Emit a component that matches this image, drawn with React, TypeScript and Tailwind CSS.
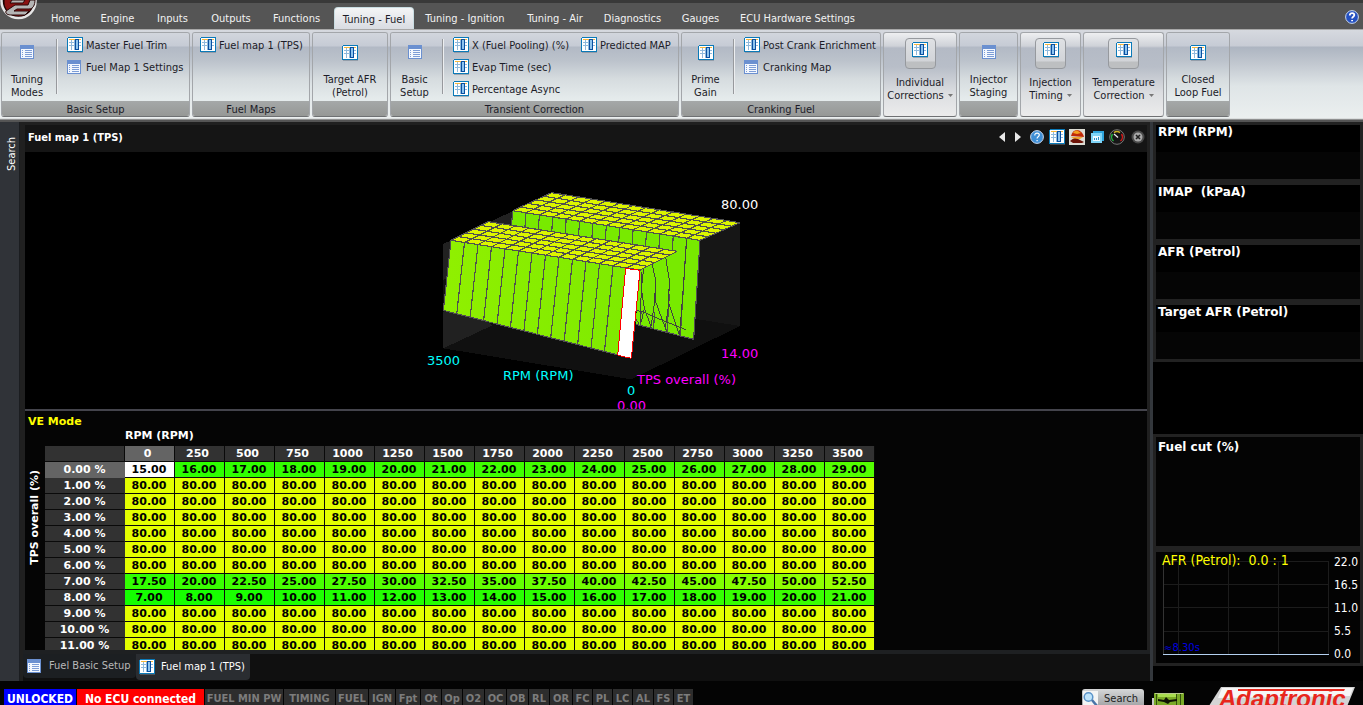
import React, { useState } from 'react';
import clsx from 'clsx';

const TAHOMA = "font-['Tahoma','DejaVu_Sans_Condensed','DejaVu_Sans',sans-serif]";
const VERDANA = "font-['Verdana','DejaVu_Sans',sans-serif]";

const menuTabs = [
    { label: 'Home', width: 'w-[49px]' },
    { label: 'Engine', width: 'w-[55px]' },
    { label: 'Inputs', width: 'w-[55px]' },
    { label: 'Outputs', width: 'w-[62px]' },
    { label: 'Functions', width: 'w-[69px]' },
    { label: 'Tuning - Fuel', width: 'w-[80px] ml-[3px]' },
    { label: 'Tuning - Ignition', width: 'w-[102px]' },
    { label: 'Tuning - Air', width: 'w-[78px]' },
    { label: 'Diagnostics', width: 'w-[77px]' },
    { label: 'Gauges', width: 'w-[59px]' },
    { label: 'ECU Hardware Settings', width: 'w-[135px]' },
];

const rpmAxis = [0, 250, 500, 750, 1000, 1250, 1500, 1750, 2000, 2250, 2500, 2750, 3000, 3250, 3500];

const flatRow = rpmAxis.map(() => 80);
const fuelRows = Array.from({ length: 12 }, (_, row) => {
    if (row === 0) return rpmAxis.map((_, i) => 15 + i);
    if (row === 7) return rpmAxis.map((_, i) => 17.5 + i * 2.5);
    if (row === 8) return rpmAxis.map((_, i) => 7 + i);
    return flatRow;
});

const statusFlags = [
    { label: 'FUEL MIN PW', width: 'w-[78px]' },
    { label: 'TIMING', width: 'w-[51px]' },
    { label: 'FUEL', width: 'w-8' },
    { label: 'IGN', width: 'w-[26px]' },
    { label: 'Fpt', width: 'w-6' },
    { label: 'Ot', width: 'w-5' },
    { label: 'Op', width: 'w-5' },
    { label: 'O2', width: 'w-[21px]' },
    { label: 'OC', width: 'w-[21px]' },
    { label: 'OB', width: 'w-[21px]' },
    { label: 'RL', width: 'w-5' },
    { label: 'OR', width: 'w-[22px]' },
    { label: 'FC', width: 'w-[19px]' },
    { label: 'PL', width: 'w-[19px]' },
    { label: 'LC', width: 'w-[19px]' },
    { label: 'AL', width: 'w-5' },
    { label: 'FS', width: 'w-[19px]' },
    { label: 'ET', width: 'w-[19px]' },
];

const TableIcon = () => (
    <svg width="16" height="16" viewBox="0 0 16 16" className="shrink-0" shapeRendering="crispEdges">
        <path d="M0 1h1V0h15v15H0z" fill="#0b7ab8" />
        <path d="M1 1h14v13H1z" fill="#fff" />
        <path d="M2 2h6v1H2zM12 2h2v1h-2z" fill="#f7b73c" />
        <path d="M2 5h12v1H2zM2 8h12v1H2zM4 3h1v10H4zM7 3h1v10H7z" fill="#8fb9dc" />
        <path d="M8 2h4v11H8z" fill="#0a4fa0" />
        <path d="M9 3h2v9H9z" fill="#8ec4ee" />
        <path d="M1 15h15v1H1z" fill="#6d7a88" opacity=".5" />
    </svg>
);

const ListIcon = () => (
    <svg width="14" height="14" viewBox="0 0 14 14" className="shrink-0" shapeRendering="crispEdges">
        <path d="M0 0h14v14H0z" fill="#6b90d0" />
        <path d="M1 4h12v9H1z" fill="#f4f8fe" />
        <path d="M2 5h1v1H2zM2 7h1v1H2zM2 9h1v1H2zM2 11h1v1H2zM5 5h7v1H5zM5 7h7v1H5zM5 9h7v1H5zM5 11h7v1H5z" fill="#7d9dd6" />
    </svg>
);

const HelpIcon = ({ dark }: { dark?: boolean }) => (
    <svg width="14" height="14" viewBox="0 0 14 14" className="shrink-0">
        <circle cx="7" cy="7" r="6.4" fill={dark ? '#2450c0' : '#3f8fd6'} stroke="#c9d8ee" strokeWidth="1" />
        <path d="M4.8 5.4c0-1.6 1-2.3 2.3-2.3s2.2.8 2.2 2c0 1.700-2.200 1.600-2.200 3.300M7.100 10v1.300" fill="none" stroke="#fff" strokeWidth={dark ? 1.800 : 1.200} />
    </svg>
);

const groupFrame = 'rounded-[3px] border border-[#a3a6aa] border-b-[#6f7173] overflow-hidden shrink-0 flex flex-col h-[85px]';

const RibbonGroup = ({ title, width, children }: { title?: string; width: string; children: React.ReactNode }) => (
    <section className={clsx(groupFrame, width)}>
        <div className="h-[68px] shrink-0 flex bg-[linear-gradient(#d2d6dd_0,#c6cbd5_13px,#b2b9c5_14px,#bcc3cc_28px,#d6dcdf_46px,#e5ebec_66px)]">
            {children}
        </div>
        <div className="h-[15px] text-center leading-[17px] bg-linear-to-b from-[#a5a8a8] to-[#969896]">{title}</div>
    </section>
);

const BigButton = ({ lines, list, width }: { lines: string[]; list?: boolean; width: string }) => (
    <button className={clsx('flex flex-col items-center justify-start pt-3 leading-[13px] whitespace-nowrap', width)}>
        <span className="h-7 flex items-start">{list ? <ListIcon /> : <TableIcon />}</span>
        {lines.map(l => <span key={l}>{l}</span>)}
    </button>
);

const SmallButton = ({ label, list }: { label: string; list?: boolean }) => (
    <button className="flex items-center gap-[3px] h-[22px] leading-[13px] whitespace-nowrap">
        <span className="w-4 flex">{list ? <ListIcon /> : <TableIcon />}</span>
        {label}
    </button>
);

const DropButton = ({ lines, width }: { lines: string[]; width: string }) => (
    <button className={clsx(groupFrame, width, 'items-center pt-[5px] leading-[13px] whitespace-nowrap bg-[linear-gradient(#eeeff1_0,#cfd2d8_13px,#b4bac5_15px,#b8bec8_34px,#dcdee1_60px,#ececec_84px)]')}>
        <span className="w-[31px] h-[31px] mb-[7px] rounded-[4px] border border-[#96999e] flex justify-center pt-[3px] bg-[linear-gradient(#dfe1e4_0,#d2d4d8_22px,#bdbfc1_23px)]">
            <TableIcon />
        </span>
        <span>{lines[0]}</span>
        <span className="flex items-center gap-1">
            {lines[1]}
            <svg width="5" height="3" viewBox="0 0 5 3"><path d="M0 0h5L2.500 3z" fill="#777" /></svg>
        </span>
    </button>
);

const Separator = () => <div className="w-0.5 h-[55px] mt-1.5 shrink-0 bg-[#97999d] border-r border-[#eceef0]" />;

// Corners of a quad, then the grid lines that split it into cols x rows cells
type Pt = [number, number];
const lerp = (a: Pt, b: Pt, t: number): Pt => [a[0] + (b[0] - a[0]) * t, a[1] + (b[1] - a[1]) * t];

const Mesh = ({ quad, cols, rows, fill }: { quad: [Pt, Pt, Pt, Pt]; cols: number; rows: number; fill: string }) => {
    const [tl, tr, br, bl] = quad;
    const lines: [Pt, Pt][] = [];
    for (let i = 0; i <= cols; i++) lines.push([lerp(tl, tr, i / cols), lerp(bl, br, i / cols)]);
    for (let j = 0; j <= rows; j++) lines.push([lerp(tl, bl, j / rows), lerp(tr, br, j / rows)]);
    return (
        <g>
            <polygon points={quad.map(p => p.join(',')).join(' ')} fill={fill} />
            <path d={lines.map(([a, b]) => `M${a[0]} ${a[1]}L${b[0]} ${b[1]}`).join('')} stroke="#505050" strokeWidth="3.5" fill="none" />
        </g>
    );
};

const Surface = () => (
    <svg width="368" height="229" viewBox="-18 0 368 229" className={clsx('text-[13px] shrink-0', VERDANA)}>
        <defs>
            <linearGradient id="face" x1="0" x2="1">
                <stop offset="0" stopColor="#90f000" />
                <stop offset="1" stopColor="#7dea00" />
            </linearGradient>
        </defs>
        <g transform="scale(0.33333)" shapeRendering="crispEdges">
            <polygon points="70,192 395,38 395,348 70,505" fill="#212121" />
            <polygon points="395,38 960,128 960,438 395,348" fill="#161616" />
            <polygon points="70,505 395,348 960,438 634,598" fill="#101010" />
            <polygon points="278,92 840,181 821,478 648,433 600,300 275,240" fill="#78e800" />
            <Mesh quad={[[278, 92], [840, 181], [821, 478], [259, 332]]} cols={14} rows={1} fill="#78ea00" />
            <polygon points="70,300 278,200 600,290 650,390 648,433 634,598 70,505" fill="#101010" />
            <polygon points="70,192 93,181 70,400 70,505 215,437" fill="#212121" />
            <Mesh quad={[[395, 38], [960, 128], [840, 181], [278, 92]]} cols={14} rows={5} fill="#dcf500" />
            <polygon points="660,270 772,214 760,330 700,400 645,390" fill="#78ea00" />
            <path d="M663 275L666 340L673 385L695 445M696 252L707 300L705 360L740 455M737 232L748 300L746 370L778 465M708 300L702 380L692 445M748 300L745 380L735 450M800 180L790 320L779 462M671 262L664 330L660 430M648 390L672 397L720 418L798 449M648 418L658 432M673 385L664 425" stroke="#404040" strokeWidth="3" fill="none" />
            <Mesh quad={[[205, 125], [772, 214], [660, 270], [93, 181]]} cols={14} rows={5} fill="#dcf500" />
            <Mesh quad={[[93, 181], [660, 270], [634, 535], [70, 391]]} cols={14} rows={1} fill="url(#face)" />
            <polygon points="617,265 660,271 634,535 593,526" fill="#fff" stroke="#f00" strokeWidth="3" />
        </g>
        <text x="301" y="29" fill="#fff">80.00</text>
        <text x="301" y="178" fill="#f0f">14.00</text>
        <text x="7" y="185" fill="#0ff">3500</text>
        <text x="83" y="200" fill="#0ff">RPM (RPM)</text>
        <text x="217" y="204" fill="#f0f">TPS overall (%)</text>
        <text x="207" y="215" fill="#0ff">0</text>
        <text x="197" y="230" fill="#f0f">0.00</text>
    </svg>
);

const PanelTools = () => (
    <div className="flex items-center gap-1 -mt-1">
        <button aria-label="Previous" className="w-3 flex"><svg width="6" height="10" viewBox="0 0 6 10"><path d="M6 0v10L0 5z" fill="#e8e8e8" /></svg></button>
        <button aria-label="Next" className="w-[10px] flex"><svg width="6" height="10" viewBox="0 0 6 10"><path d="M0 0v10l6-5z" fill="#e8e8e8" /></svg></button>
        <button aria-label="Help" className="w-4 flex justify-center"><HelpIcon /></button>
        <button aria-label="Table view"><TableIcon /></button>
        <button aria-label="Surface view">
            <svg width="16" height="16" viewBox="0 0 16 16">
                <path d="M0 0h16v16H0z" fill="#dcdcd4" />
                <path d="M2 7C3 3 5 1 8 1s6 3 7 7z" fill="#c02808" />
                <path d="M4 4c1-2 3-3 5-2l3 2-4 1z" fill="#f4a020" />
                <path d="M2 8h12l-3 2H5z" fill="#f0a830" />
                <path d="M1 12c3-3 5-3 8-2l6 3-2 1H4z" fill="#6e1408" />
            </svg>
        </button>
        <button aria-label="Windows" className="w-4 flex justify-center">
            <svg width="13" height="12" viewBox="0 0 13 12">
                <path d="M2 0h11v10H2z" fill="#2fa4dc" />
                <path d="M0 2h11v10H0z" fill="#7fd4f6" />
                <path d="M2 5h7v5H2z" fill="#e9f8ff" />
                <path d="M3 9V7h1v2zM5 9V7h1v2zM7 9V6h1v3z" fill="#2b8fc6" />
            </svg>
        </button>
        <button aria-label="Gauges">
            <svg width="16" height="16" viewBox="0 0 16 16">
                <circle cx="8" cy="8" r="7.300" fill="#161616" stroke="#777" />
                <path d="M4.500 12A5.300 5.300 0 0 1 3.500 5" fill="none" stroke="#1fae3c" strokeWidth="1.500" />
                <path d="M5 3.600A5.300 5.300 0 0 1 11 3.600" fill="none" stroke="#c9b020" strokeWidth="1.500" />
                <path d="M12.500 5A5.300 5.300 0 0 1 11.500 12" fill="none" stroke="#d01818" strokeWidth="1.500" />
                <path d="M5 5l4 3.500" stroke="#eee" strokeWidth="1.300" />
            </svg>
        </button>
        <button aria-label="Close" className="w-4 flex justify-end">
            <svg width="14" height="14" viewBox="0 0 14 14">
                <circle cx="7" cy="7" r="6.500" fill="#4a4a4a" />
                <circle cx="7" cy="7" r="4.500" fill="#a8a8a8" />
                <path d="M5 5l4 4M9 5l-4 4" stroke="#222" strokeWidth="1.600" />
            </svg>
        </button>
    </div>
);

const cellColour = (v: number) => `rgb(${Math.round(v * 2.85)}, 255, 0)`;

const FuelTable = () => (
    <table className="table-fixed w-[830px] border-separate border-spacing-0 text-[11px] leading-[15px] font-bold text-center">
        <thead>
            <tr className="text-white">
                <th aria-label="TPS" className="w-20 h-4 p-0 bg-[#323232] border-r border-b border-[#0a0a0a]" />
                {rpmAxis.map((rpm, i) => (
                    <th key={rpm} className={clsx('h-4 p-0 pr-1 border-r border-b border-[#0a0a0a]', i === 0 ? 'bg-[#646464]' : 'bg-[#323232]')}>{rpm}</th>
                ))}
            </tr>
        </thead>
        <tbody>
            {fuelRows.map((row, r) => (
                <tr key={r}>
                    <th className={clsx('h-4 p-0 text-white border-r border-b', r === 0 ? 'bg-[#646464] border-[#646464]' : 'bg-[#323232] border-[#323232] border-b-[#0a0a0a]')}>
                        {r.toFixed(2)} %
                    </th>
                    {row.map((v, c) => (
                        <td
                            key={c}
                            className="h-4 p-0 pr-px text-black border-r border-b border-[#0a0a0a]"
                            style={{ backgroundColor: r === 0 && c === 0 ? '#fff' : cellColour(v) }}
                        >
                            {v.toFixed(2)}
                        </td>
                    ))}
                </tr>
            ))}
        </tbody>
    </table>
);

const Readout = ({ label }: { label: string }) => (
    <div className="h-[54px] flex flex-col bg-black">
        <div className="h-[27px] px-0.5 text-[12px] leading-[15px] font-bold text-white whitespace-pre">{label}</div>
        <div className="flex-1 bg-[#050505]" />
    </div>
);

const AfrGraph = () => (
    <div className={clsx('relative h-[111px] bg-[#030303] text-[12px]', TAHOMA)}>
        <svg width="204" height="111" viewBox="0 0 204 111" shapeRendering="crispEdges">
            <path d="M7 9.500h165M7 32.500h165M7 55.500h165M7 79.500h165M22.500 9v93M72.500 9v93M122.500 9v93M172.500 9v93" stroke="#1c1c1c" />
            <path d="M7.500 9v93" stroke="#333" />
            <path d="M7 102.500h166" stroke="#b4d0f0" />
        </svg>
        <div className="absolute left-1.5 top-0 text-[14px] leading-[17px] text-[#ffff00] whitespace-pre">AFR (Petrol):  0.0 : 1</div>
        <div className={clsx('absolute left-2 top-[89px] text-[10px] leading-[13px] text-[#0000e0]', VERDANA)}>≈8.30s</div>
        <div className="absolute left-[178px] top-[-1px] flex flex-col leading-[23px] text-white">
            {['22.0', '16.5', '11.0', '5.5', '0.0'].map(v => <span key={v}>{v}</span>)}
        </div>
    </div>
);

const StatusBar = () => (
    <footer className={clsx('h-6 shrink-0 flex pt-2 pl-1 bg-[#040404] overflow-hidden text-[11px] leading-[20px] font-bold', TAHOMA)}>
        <div className="flex gap-px h-5 text-center whitespace-nowrap text-[#7c7c7c]">
            <span className="w-[72px] bg-[#0000ff] text-white text-[12px]">UNLOCKED</span>
            <span className="w-[127px] bg-[#ff0000] text-white text-[12px]">No ECU connected</span>
            {statusFlags.map(f => <span key={f.label} className={clsx('bg-[#2d2d2d]', f.width)}>{f.label}</span>)}
        </div>
        <div className="flex ml-auto mr-2">
            <button className="w-[62px] h-5 mr-2 rounded-[3px] flex items-center gap-[5px] bg-linear-to-b from-[#d6d7d8] to-[#9a9c9e] text-[#222] font-normal">
                <svg width="17" height="18" viewBox="0 0 17 18" className="shrink-0">
                    <path d="M1 1h15v17H1z" fill="#f4f4f4" />
                    <circle cx="6.500" cy="7" r="4.300" fill="#bfe4fb" stroke="#5b93c8" strokeWidth="1.500" />
                    <path d="M10 10l5 6" stroke="#4a74a8" strokeWidth="2.500" />
                </svg>
                Search
            </button>
            <svg width="32" height="18" viewBox="0 0 32 18" className="mt-[3px] mr-[23px] shrink-0">
                <path d="M0 6h3v8H0z" fill="#c8c8c8" />
                <path d="M2 1h30v17H2z" fill="#7cab28" />
                <path d="M3 1h28v1H3z" fill="#b9c98e" />
                <path d="M6 2h19v3H6z" fill="#a8dc4e" />
                <path d="M4 2h1v16H4zM24 2h1v16h-1zM28 2h1v16h-1z" fill="#33500c" />
                <path d="M6 7l6 1 2-3 3 3 8-1v2l-7 1-2 2-4-2-6-1z" fill="#101404" />
            </svg>
            <svg width="148" height="20" viewBox="0 0 148 20" className="-mt-1 shrink-0">
                <path d="M14 2h134l-9 22H0z" fill="#d4d4d4" />
                <path d="M15 3h131l-3 8-132 2z" fill="#f6f6f6" />
                <text x="12" y="22" fontFamily="Liberation Sans, sans-serif" fontSize="24" fontWeight="bold" fontStyle="italic" fill="#e8261c">Adaptronic</text>
                <path d="M31 4h107l-1 2H31z" fill="#e8261c" />
            </svg>
        </div>
    </footer>
);

export default function App() {
    const [activeTab, setActiveTab] = useState('Tuning - Fuel');

    return (
        <div className={clsx('h-screen flex flex-col overflow-hidden bg-black text-[11px] text-[#1c1c28]', TAHOMA)}>
            {/* Menu tabs */}
            <header className="h-[30px] shrink-0 flex bg-[#555555] border-t-[3px] border-[#393939] border-b border-b-[#a8a8a8]">
                <div className="w-[41px] shrink-0">
                    <svg width="38" height="20" viewBox="0 0 38 20" className="-mt-[3px]">
                        <circle cx="18.500" cy="1" r="17" fill="#1c0303" stroke="#e6e6e6" strokeWidth="2.500" />
                        <circle cx="18.500" cy="2" r="14" fill="#8c1212" />
                        <path d="M6 11L15 5h13l2-5h5c0 5-2 9-6 9H17l-3 2h15l-4 4H12c-4 0-7-1-6-4z" fill="#b4b4b4" stroke="#2a0606" />
                        <path d="M12 0h13l-2 3H10z" fill="#b4b4b4" stroke="#2a0606" />
                    </svg>
                </div>
                <nav className="flex items-end">
                    {menuTabs.map(tab => (
                        <button
                            key={tab.label}
                            onClick={() => setActiveTab(tab.label)}
                            className={clsx(
                                'h-[22px] pt-[3px] whitespace-nowrap shrink-0 text-center',
                                tab.width,
                                activeTab === tab.label
                                    ? 'rounded-t-[4px] border border-b-0 border-[#c9dde2] bg-linear-to-b from-[#f4f5f6] to-[#d9dce2]'
                                    : 'text-[#f2f2f2]'
                            )}
                        >
                            {tab.label}
                        </button>
                    ))}
                </nav>
                <button aria-label="Help" className="ml-auto mr-1 mt-[7px] self-start"><HelpIcon dark /></button>
            </header>

            {/* Ribbon */}
            <div className="h-[92px] shrink-0 flex gap-0.5 pt-0.5 pl-px bg-[linear-gradient(#d6d9df_0,#c8ccd5_16px,#adb5c1_17px,#c2c8d0_34px,#dfe5e7_56px,#ebefef_88px,#c9cbcb_89px,#555_90px)]">
                <RibbonGroup title="Basic Setup" width="w-[189px]">
                    <BigButton list lines={['Tuning', 'Modes']} width="w-[50px]" />
                    <div className="w-1 shrink-0" />
                    <Separator />
                    <div className="pl-[9px] pt-px">
                        <SmallButton label="Master Fuel Trim" />
                        <SmallButton list label="Fuel Map 1 Settings" />
                    </div>
                </RibbonGroup>
                <RibbonGroup title="Fuel Maps" width="w-[118px]">
                    <div className="pl-[7px] pt-px"><SmallButton label="Fuel map 1 (TPS)" /></div>
                </RibbonGroup>
                <RibbonGroup width="w-[76px]">
                    <BigButton lines={['Target AFR', '(Petrol)']} width="w-full" />
                </RibbonGroup>
                <RibbonGroup title="Transient Correction" width="w-[289px]">
                    <BigButton list lines={['Basic', 'Setup']} width="w-[47px]" />
                    <div className="w-1 shrink-0" />
                    <Separator />
                    <div className="pl-[9px] pt-px w-[137px] shrink-0">
                        <SmallButton label="X (Fuel Pooling) (%)" />
                        <SmallButton label="Evap Time (sec)" />
                        <SmallButton label="Percentage Async" />
                    </div>
                    <div className="pt-px"><SmallButton label="Predicted MAP" /></div>
                </RibbonGroup>
                <RibbonGroup title="Cranking Fuel" width="w-[200px]">
                    <BigButton lines={['Prime', 'Gain']} width="w-[47px]" />
                    <div className="w-1 shrink-0" />
                    <Separator />
                    <div className="pl-[9px] pt-px">
                        <SmallButton label="Post Crank Enrichment" />
                        <SmallButton list label="Cranking Map" />
                    </div>
                </RibbonGroup>
                <DropButton lines={['Individual', 'Corrections']} width="w-[74px]" />
                <RibbonGroup width="w-[59px]">
                    <BigButton list lines={['Injector', 'Staging']} width="w-full" />
                </RibbonGroup>
                <DropButton lines={['Injection', 'Timing']} width="w-[61px]" />
                <DropButton lines={['Temperature', 'Correction']} width="w-[81px]" />
                <RibbonGroup width="w-[64px]">
                    <BigButton lines={['Closed', 'Loop Fuel']} width="w-full" />
                </RibbonGroup>
            </div>

            {/* Workspace */}
            <main className={clsx('flex-1 min-h-0 flex', VERDANA)}>
                <aside className={clsx('w-5 shrink-0 bg-[#303338] border-r border-[#1b1d20]', TAHOMA)}>
                    <button className="mt-1 h-[55px] w-full pl-1 flex items-center justify-center text-white">
                        <span className="[writing-mode:vertical-rl] rotate-180 leading-[13px]">Search</span>
                    </button>
                </aside>

                <div className="flex-1 min-w-0 flex flex-col bg-[#202020] pl-[5px] pt-[3px]">
                    <div className="h-[27px] shrink-0 mr-[3px] flex items-center justify-between pl-[3px] pr-0.5 bg-[#151515]">
                        <h1 className={clsx('text-[11px] font-bold text-white', TAHOMA)}>Fuel map 1 (TPS)</h1>
                        <PanelTools />
                    </div>
                    <div className="h-[257px] shrink-0 mr-[3px] flex items-end justify-center bg-black overflow-hidden">
                        <Surface />
                    </div>
                    <div className="flex-1 min-h-0 mr-[3px] border-t-2 border-[#44444c] bg-[#050505] overflow-hidden">
                        <div className="pl-[3px] pt-0.5 text-[11px] leading-[17px] h-[17px] font-bold text-[#ffff00]">VE Mode</div>
                        <div className="pl-[100px] text-[11px] leading-[15px] h-[18px] font-bold text-white">RPM (RPM)</div>
                        <div className="flex">
                            <div className="w-5 h-[142px] shrink-0 flex items-center justify-center text-[11px] font-bold text-white">
                                <span className="[writing-mode:vertical-rl] rotate-180 whitespace-nowrap">TPS overall (%)</span>
                            </div>
                            <FuelTable />
                        </div>
                    </div>
                    <div className={clsx('h-[31px] shrink-0 -ml-0.5 border-t-4 border-[#1e2022] bg-[#101010] flex items-start text-[#b8b8b8]', TAHOMA)}>
                        <button className="w-[113px] h-6 pl-1 flex items-center gap-2 rounded-b-[4px] bg-[#1c1f22]"><ListIcon />Fuel Basic Setup</button>
                        <button className="w-[114px] h-[26px] pl-[3px] flex items-center gap-1.5 rounded-b-[4px] bg-[#2a2d31] text-white"><TableIcon />Fuel map 1 (TPS)</button>
                    </div>
                </div>

                <div className="w-[3px] shrink-0 bg-[#33373c]" />

                <aside className="w-[210px] shrink-0 flex flex-col text-white">
                    <div className="flex flex-col gap-1.5 border-[3px] border-[#222] bg-[#222]">
                        <Readout label="RPM (RPM)" />
                        <Readout label="IMAP  (kPaA)" />
                        <Readout label="AFR (Petrol)" />
                        <Readout label="Target AFR (Petrol)" />
                    </div>
                    <div className="h-[72px] shrink-0" />
                    <div className="flex flex-col gap-1.5 border-[3px] border-[#222] bg-[#222]">
                        <div className="h-[109px] px-0.5 pt-0.5 bg-[#040404] text-[12px] leading-[17px] font-bold">Fuel cut (%)</div>
                        <AfrGraph />
                    </div>
                </aside>
            </main>

            <StatusBar />
        </div>
    );
}
